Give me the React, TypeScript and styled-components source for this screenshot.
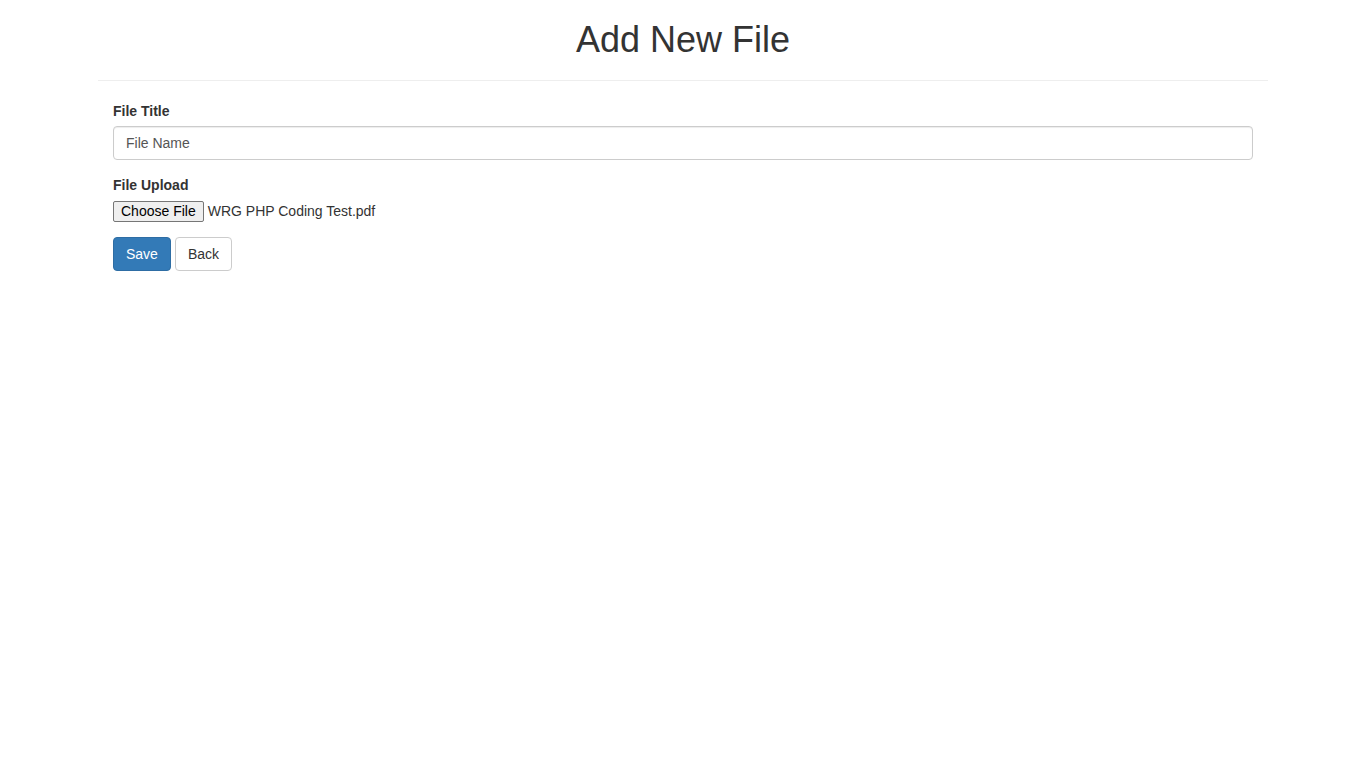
import React from 'react';
import styled, { createGlobalStyle } from 'styled-components';

const GlobalStyle = createGlobalStyle`
  html, body {
    margin: 0;
    padding: 0;
    background: #fff;
  }
  body {
    font-family: "Liberation Sans", Arial, Helvetica, sans-serif;
    font-size: 14px;
    line-height: 1.42857143;
    color: #333;
  }
  * {
    box-sizing: border-box;
  }
`;

const Header = styled.div`
  width: 1170px;
  margin: 0 auto;
  padding-bottom: 20px;
  border-bottom: 1px solid #eee;
`;

const Title = styled.h1`
  margin: 20px 0 0;
  font-size: 36px;
  font-weight: 500;
  line-height: 40px;
  text-align: center;
  color: #333;
`;

const Container = styled.div`
  width: 1170px;
  margin: 0 auto;
  padding: 20px 15px 0;
`;

const FormGroup = styled.div`
  margin-bottom: 15px;
`;

const Label = styled.label`
  display: block;
  margin-bottom: 5px;
  font-weight: 700;
  line-height: 20px;
`;

const TextInput = styled.input`
  display: block;
  width: 100%;
  height: 34px;
  padding: 6px 12px;
  font-family: inherit;
  font-size: 14px;
  line-height: 1.42857143;
  color: #555;
  background: #fff;
  border: 1px solid #ccc;
  border-radius: 4px;
  box-shadow: inset 0 1px 1px rgba(0, 0, 0, 0.075);
  outline: none;

  &::placeholder {
    color: #555;
  }
`;

const FileRow = styled.div`
  display: flex;
  align-items: center;
  gap: 4px;
  height: 22px;
`;

const FileButton = styled.button`
  height: 21px;
  padding: 0 7px;
  font-family: "Liberation Sans", Arial, sans-serif;
  font-size: 14px;
  line-height: 19px;
  color: #000;
  background: #efefef;
  border: 1px solid #767676;
  border-radius: 2px;
`;

const FileName = styled.span`
  font-size: 14px;
  color: #333;
`;

const Actions = styled.div`
  display: flex;
  gap: 4px;
`;

const Button = styled.button<{ $primary?: boolean }>`
  height: 34px;
  padding: 6px 12px;
  font-family: inherit;
  font-size: 14px;
  line-height: 1.42857143;
  border-radius: 4px;
  cursor: pointer;
  color: ${({ $primary }) => ($primary ? '#fff' : '#333')};
  background: ${({ $primary }) => ($primary ? '#337ab7' : '#fff')};
  border: 1px solid ${({ $primary }) => ($primary ? '#2e6da4' : '#ccc')};
`;

export default function App() {
  return (
    <>
      <GlobalStyle />
      <Header>
        <Title>Add New File</Title>
      </Header>
      <Container>
        <form onSubmit={(e) => e.preventDefault()}>
          <FormGroup>
            <Label htmlFor="title">File Title</Label>
            <TextInput id="title" type="text" placeholder="File Name" />
          </FormGroup>
          <FormGroup>
            <Label>File Upload</Label>
            <FileRow>
              <FileButton type="button">Choose File</FileButton>
              <FileName>WRG PHP Coding Test.pdf</FileName>
            </FileRow>
          </FormGroup>
          <Actions>
            <Button $primary type="submit">
              Save
            </Button>
            <Button type="button">Back</Button>
          </Actions>
        </form>
      </Container>
    </>
  );
}
